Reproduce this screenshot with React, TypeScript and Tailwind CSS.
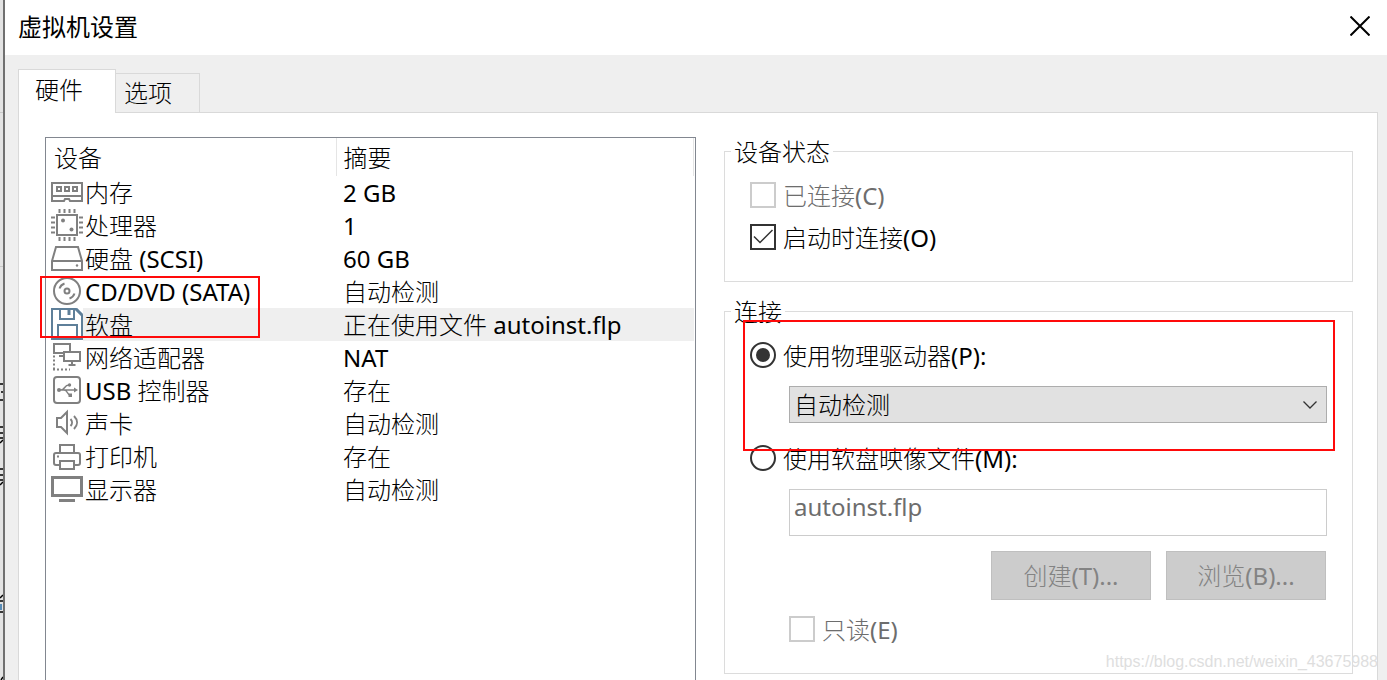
import React from 'react';

interface Device {
  icon: React.ReactNode;
  name: string;
  summary: string;
  selected?: boolean;
}

const Icon: React.FC<{ children: React.ReactNode; className?: string }> = ({ children, className }) => (
  <svg
    width="32"
    height="32"
    viewBox="0 0 32 32"
    fill="none"
    stroke="currentColor"
    strokeWidth="2"
    className={`shrink-0 ${className ?? 'text-[#808080]'}`}
    aria-hidden="true"
  >
    {children}
  </svg>
);

const MemoryIcon = () => (
  <Icon>
    <path d="M1 7h30v18H19l-1-2h-4l-1 2H1zM1 20h30" />
    <path d="M6 11h4v4H6zM14 11h4v4h-4zM22 11h4v4h-4z" />
  </Icon>
);

const CpuIcon = () => (
  <Icon>
    <path d="M6 6h20v20H6z" />
    <path d="M8.500 0v4M13.500 0v4M18.500 0v4M23.500 0v4M8.500 28v4M13.500 28v4M18.500 28v4M23.500 28v4" />
    <path d="M0 8.500h4M0 13.500h4M0 18.500h4M0 23.500h4M28 8.500h4M28 13.500h4M28 18.500h4M28 23.500h4" />
    <circle cx="12" cy="11.500" r="2" fill="currentColor" stroke="none" />
    <circle cx="20.500" cy="20.500" r="2" fill="currentColor" stroke="none" />
  </Icon>
);

const DiskIcon = () => (
  <Icon>
    <path d="M1 19L5 5h22l4 14v9H1zM1 19h30" />
    <circle cx="26" cy="23.500" r="1.200" fill="currentColor" stroke="none" />
  </Icon>
);

const DiscIcon = () => (
  <Icon>
    <circle cx="16" cy="16" r="13" />
    <circle cx="16" cy="16" r="2.500" />
    <path d="M8.500 13.500a8 8 0 0 1 5-5M23.500 18.500a8 8 0 0 1-5 5" />
  </Icon>
);

const FloppyIcon = () => (
  <Icon className="text-[#5e7f99]">
    <path d="M1 1h24l6 6v24H1z" />
    <path d="M9 1v10h14V1M7 31V17h19v14" />
    <path d="M18 2v5" strokeWidth="3" />
    <path d="M25 1l6 6" strokeWidth="3" />
  </Icon>
);

const NetworkIcon = () => (
  <Icon>
    <path d="M12 12H3V3h16v7" />
    <path d="M13 11h16v9H13zM21 20v4M17.500 24h7M8 15h4" />
    <path d="M3 14.500v15" strokeDasharray="2 2" />
    <path d="M2 28.500h17" strokeDasharray="2 2" />
  </Icon>
);

const UsbIcon = () => (
  <Icon>
    <rect x="3" y="3" width="26" height="26" rx="3" />
    <path d="M7 16h17M10 16c4 0 3-5 8-5M13 16c4 0 3 5 6 5" strokeWidth="1.500" />
    <path d="M23 13.500l4 2.500-4 2.500z" fill="currentColor" stroke="none" />
    <circle cx="8" cy="16" r="2" fill="currentColor" stroke="none" />
    <circle cx="18.500" cy="11" r="1.700" fill="currentColor" stroke="none" />
    <path d="M17.500 19.500h3.500v3.500h-3.500z" fill="currentColor" stroke="none" />
  </Icon>
);

const SoundIcon = () => (
  <Icon>
    <path d="M6 11h4l6-6v21l-6-6H6z" />
    <path d="M19.500 12c2 2 2 5 0 7M23 9c4 4 4 9 0 13" />
  </Icon>
);

const PrinterIcon = () => (
  <Icon>
    <path d="M9 12V5h14v7M9 25H5a2 2 0 0 1-2-2v-8a2 2 0 0 1 2-2h22a2 2 0 0 1 2 2v8a2 2 0 0 1-2 2h-4" />
    <path d="M9 21h14v8H9z" />
    <path d="M6 16.500h2" />
  </Icon>
);

const DisplayIcon = () => (
  <Icon>
    <path d="M1.500 4.500h29v18h-29z" strokeWidth="3" />
    <path d="M8 27.500h16" strokeWidth="3" />
  </Icon>
);

const devices: Device[] = [
  { icon: <MemoryIcon />, name: '内存', summary: '2 GB' },
  { icon: <CpuIcon />, name: '处理器', summary: '1' },
  { icon: <DiskIcon />, name: '硬盘 (SCSI)', summary: '60 GB' },
  { icon: <DiscIcon />, name: 'CD/DVD (SATA)', summary: '自动检测' },
  { icon: <FloppyIcon />, name: '软盘', summary: '正在使用文件 autoinst.flp', selected: true },
  { icon: <NetworkIcon />, name: '网络适配器', summary: 'NAT' },
  { icon: <UsbIcon />, name: 'USB 控制器', summary: '存在' },
  { icon: <SoundIcon />, name: '声卡', summary: '自动检测' },
  { icon: <PrinterIcon />, name: '打印机', summary: '存在' },
  { icon: <DisplayIcon />, name: '显示器', summary: '自动检测' },
];

// Strip of the window that lies behind the dialog
const BackgroundEdge = () => (
  <div className="w-[5px] shrink-0 border-r-2 border-[#707070] bg-[#e3e3e3]">
    <svg width="3" height="680" viewBox="0 0 3 680" stroke="#000" strokeWidth="1.500" fill="none" aria-hidden="true">
      <path d="M0 112.500h3M0 266.500h3" stroke="#c8c8c8" strokeWidth="1" />
      <path d="M0 384h3M1 392h2M0 400h3M0 427h3M0 433h3M0 438h3M0 443l3-3M0 469h3M0 475h3M0 480h3M0 485l3-3" />
      <path d="M0 598l3-3M0 601h3M0 612h3M1 680l2-3" />
      <path d="M1 604v6" stroke="#2a6fa8" />
    </svg>
  </div>
);

interface OptionProps {
  type: 'checkbox' | 'radio';
  id: string;
  label: string;
  name?: string;
  defaultChecked?: boolean;
  disabled?: boolean;
}

const Option: React.FC<OptionProps> = ({ type, id, label, ...rest }) => (
  <div className="flex h-[26px] items-center gap-[7px]">
    <span className="relative size-[26px] shrink-0">
      <input
        type={type}
        id={id}
        {...rest}
        className={`peer block size-[26px] appearance-none border-2 border-[#333] bg-white disabled:border-[#ccc] ${type === 'radio' ? 'rounded-full' : ''}`}
      />
      <svg
        viewBox="0 0 26 26"
        className="pointer-events-none absolute inset-0 hidden size-[26px] peer-checked:block"
        fill="none"
        stroke="#333"
        strokeWidth="1.500"
        aria-hidden="true"
      >
        {type === 'radio' ? <circle cx="13" cy="13" r="7" fill="#333" stroke="none" /> : <path d="M4 12.500l6 6L22.500 6" />}
      </svg>
    </span>
    <label htmlFor={id} className={`pt-0.5 whitespace-nowrap leading-[30px] ${rest.disabled ? 'text-[#6d6d6d]' : ''}`}>
      {label}
    </label>
  </div>
);

const Group: React.FC<{ title: string; children: React.ReactNode }> = ({ title, children }) => (
  <fieldset className="relative min-w-0 border border-[#dcdcdc] px-[25px] pb-[31px]">
    <legend className="-ml-[19px] px-[3px] leading-[29px]">{title}</legend>
    {children}
  </fieldset>
);

const DeviceList = () => (
  <div className="relative min-w-0 border border-b-0 border-[#828790] pr-px">
    <table className="w-full table-fixed border-collapse text-left">
      <thead>
        <tr className="h-[38px]">
          <th className="w-[290px] border-r border-[#e5e5e5] pt-0.5 pl-2 font-normal">设备</th>
          <th className="border-r border-[#e5e5e5] pt-0.5 pl-[7px] font-normal">摘要</th>
        </tr>
      </thead>
      <tbody>
        {devices.map((device) => (
          <tr key={device.name} className="h-[33px]">
            <td className="p-0">
              <div className="flex h-[33px] pl-[5px]">
                {device.icon}
                <span className={`flex-1 pl-[2px] leading-[34px] ${device.selected ? 'bg-[#efefef]' : ''}`}>
                  {device.name}
                </span>
              </div>
            </td>
            <td className={`p-0 pl-[7px] leading-[33px] whitespace-nowrap ${device.selected ? 'bg-[#efefef]' : ''}`}>
              {device.summary}
            </td>
          </tr>
        ))}
      </tbody>
    </table>
    <div className="pointer-events-none absolute top-[138px] -left-[6px] h-[62px] w-[220px] border-2 border-[#ff0a0a]" />
  </div>
);

const App: React.FC = () => (
  <div className="relative flex min-h-screen bg-[#efefef] font-['Noto_Sans','Noto_Sans_CJK_SC_Light','Noto_Sans_CJK_SC',sans-serif] text-[24px] text-black">
    <BackgroundEdge />
    <main className="flex min-w-0 flex-1 flex-col">
      <header className="flex h-[55px] items-center justify-between bg-white pr-[17px] pb-[3px] pl-[13px]">
        <h1 className="font-['Noto_Sans_CJK_SC',sans-serif]">虚拟机设置</h1>
        <button type="button" aria-label="关闭" className="flex items-center justify-center">
          <svg width="20" height="20" viewBox="0 0 20 20" fill="none" stroke="#000" strokeWidth="2" aria-hidden="true">
            <path d="M.5.500l19 19M19.500.500l-19 19" />
          </svg>
        </button>
      </header>

      <div className="mt-[14px] ml-[13px] flex items-end" role="tablist">
        <button
          type="button"
          role="tab"
          aria-selected="true"
          className="relative z-10 -mb-px h-[44px] w-[98px] border border-b-0 border-[#d9d9d9] bg-white pb-1 pl-4 text-left"
        >
          硬件
        </button>
        <button
          type="button"
          role="tab"
          aria-selected="false"
          className="-ml-px h-[39px] w-[85px] border border-b-0 border-[#d9d9d9] pl-2 text-left"
        >
          选项
        </button>
      </div>

      <div className="mr-[9px] ml-[13px] grid flex-1 grid-cols-[651fr_629fr] gap-x-7 border border-b-0 border-[#d9d9d9] bg-white pt-6 pr-6 pl-[26px]">
        <DeviceList />

        <div className="flex min-w-0 flex-col gap-[15px] pb-[6px]">
          <Group title="设备状态">
            <div className="flex flex-col gap-4 pt-4">
              <Option type="checkbox" id="connected" label="已连接(C)" disabled />
              <Option type="checkbox" id="connect-on-start" label="启动时连接(O)" defaultChecked />
            </div>
          </Group>

          <Group title="连接">
            <div className="pt-4">
              <Option type="radio" name="source" id="physical" label="使用物理驱动器(P):" defaultChecked />
              <div className="relative mt-[18px] ml-[39px]">
                <select
                  aria-label="物理驱动器"
                  className="block h-[37px] w-full appearance-none border border-[#adadad] bg-[#e1e1e1] px-1"
                >
                  <option>自动检测</option>
                </select>
                <svg
                  width="14"
                  height="8"
                  viewBox="0 0 14 8"
                  fill="none"
                  stroke="#333"
                  strokeWidth="1.300"
                  className="pointer-events-none absolute top-[15px] right-[10px]"
                  aria-hidden="true"
                >
                  <path d="M.5.500L7 7 13.500.500" />
                </svg>
              </div>
              <div className="mt-[22px]">
                <Option type="radio" name="source" id="image" label="使用软盘映像文件(M):" />
              </div>
              <div className="mt-[18px] ml-[39px]">
                <input
                  type="text"
                  aria-label="软盘映像文件"
                  defaultValue="autoinst.flp"
                  disabled
                  className="block h-[47px] w-full border border-[#ccc] bg-white px-1 pb-3 text-[#6d6d6d]"
                />
                <div className="mt-[15px] flex justify-end gap-[15px] pr-px">
                  <button type="button" disabled className="h-[49px] w-40 border border-[#bfbfbf] bg-[#ccc] text-[#838383]">
                    创建(T)...
                  </button>
                  <button type="button" disabled className="h-[49px] w-40 border border-[#bfbfbf] bg-[#ccc] text-[#838383]">
                    浏览(B)...
                  </button>
                </div>
                <div className="mt-4">
                  <Option type="checkbox" id="readonly" label="只读(E)" disabled />
                </div>
              </div>
            </div>
            <div className="pointer-events-none absolute -top-[6px] right-[17px] left-[18px] h-[131px] border-2 border-[#ff0a0a]" />
          </Group>
        </div>
      </div>
    </main>
    <span className="absolute right-[9px] bottom-[8px] font-['Liberation_Sans',sans-serif] text-[16px] leading-5 text-[#dedede]">
      https://blog.csdn.net/weixin_43675988
    </span>
  </div>
);

export default App;
